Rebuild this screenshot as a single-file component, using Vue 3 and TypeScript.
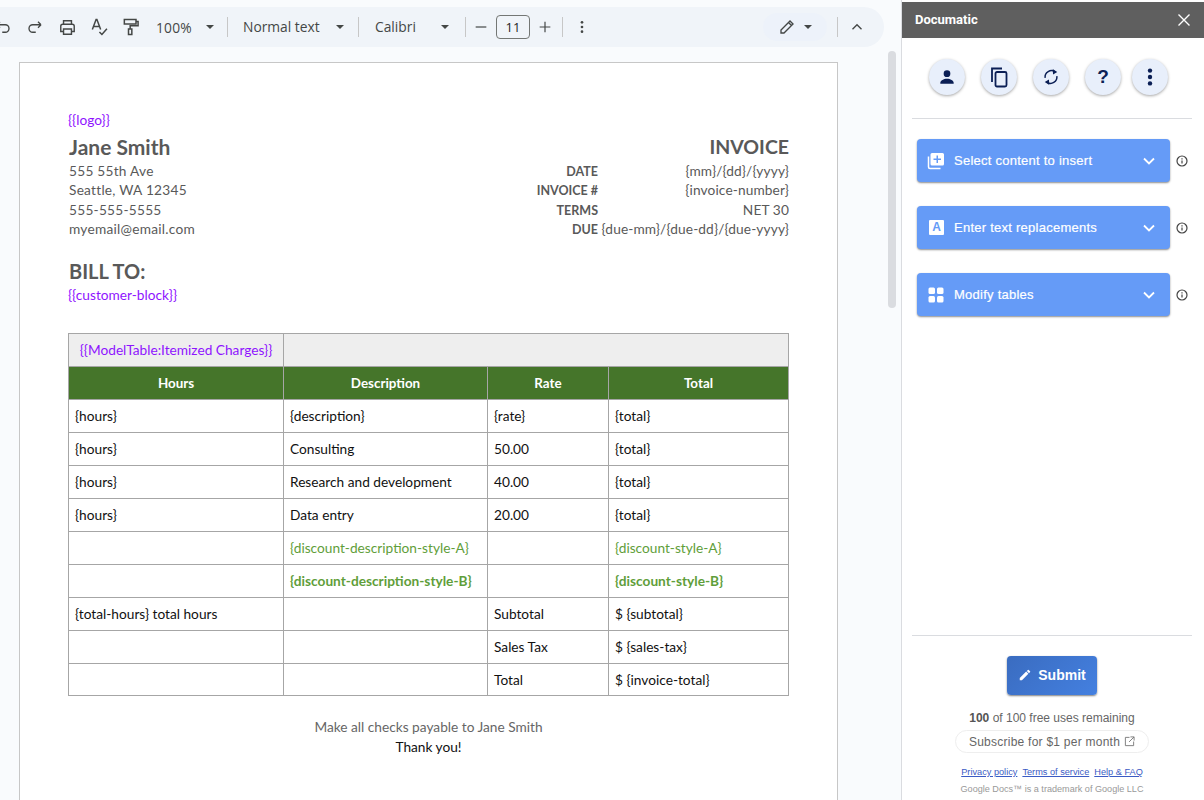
<script setup lang="ts">
interface Row { a: string; b: string; c: string; d: string; kind?: string }
const rows: Row[] = [
  { a: '{hours}', b: '{description}', c: '{rate}', d: '{total}' },
  { a: '{hours}', b: 'Consulting', c: '50.00', d: '{total}' },
  { a: '{hours}', b: 'Research and development', c: '40.00', d: '{total}' },
  { a: '{hours}', b: 'Data entry', c: '20.00', d: '{total}' },
  { a: '', b: '{discount-description-style-A}', c: '', d: '{discount-style-A}', kind: 'green' },
  { a: '', b: '{discount-description-style-B}', c: '', d: '{discount-style-B}', kind: 'green bold' },
  { a: '{total-hours} total hours', b: '', c: 'Subtotal', d: '$ {subtotal}' },
  { a: '', b: '', c: 'Sales Tax', d: '$ {sales-tax}' },
  { a: '', b: '', c: 'Total', d: '$ {invoice-total}' },
]
const meta = [
  ['DATE', '{mm}/{dd}/{yyyy}'],
  ['INVOICE #', '{invoice-number}'],
  ['TERMS', 'NET 30'],
  ['DUE', '{due-mm}/{due-dd}/{due-yyyy}'],
]
const address = ['555 55th Ave', 'Seattle, WA 12345', '555-555-5555', 'myemail@email.com']
</script>

<template>
  <div class="app">
    <main class="main">
      <div class="toolbar">
        <button class="tb"><svg width="18" height="18" viewBox="0 0 24 24" class="ic"><path d="M4 9h11a5 5 0 0 1 0 10h-4M4 9l4-4M4 9l4 4" /></svg></button>
        <button class="tb"><svg width="18" height="18" viewBox="0 0 24 24" class="ic"><path d="M20 9H9a5 5 0 0 0 0 10h4M20 9l-4-4M20 9l-4 4" /></svg></button>
        <button class="tb"><svg width="19" height="19" viewBox="0 0 24 24" class="ic"><path d="M7 8V3.500h10V8M7 17H3.500v-6.500a2.500 2.500 0 0 1 2.500-2.500h12a2.500 2.500 0 0 1 2.500 2.500V17H17M7 14h10v6.500H7z" /></svg></button>
        <button class="tb"><svg width="20" height="20" viewBox="0 0 24 24" class="ic"><path d="M4 15L8.500 3h1L14 15M5.500 11.500h7M12.500 18l3 3 6-7" /></svg></button>
        <button class="tb"><svg width="20" height="20" viewBox="0 0 24 24" class="ic"><path d="M4 3h14v5.500H4zM18 5.500h2.500v5H11v4M9 14.500h4V21H9z" /></svg></button>
        <div class="drop zoom"><span>100%</span><i class="caret"></i></div>
        <i class="sep"></i>
        <div class="drop style"><span>Normal text</span><i class="caret"></i></div>
        <i class="sep"></i>
        <div class="drop font"><span>Calibri</span><i class="caret"></i></div>
        <i class="sep"></i>
        <button class="tb sm"><svg width="16" height="16" viewBox="0 0 24 24" class="ic"><path d="M4 12h16" /></svg></button>
        <div class="size">11</div>
        <button class="tb sm plus"><svg width="16" height="16" viewBox="0 0 24 24" class="ic"><path d="M4 12h16M12 4v16" /></svg></button>
        <i class="sep"></i>
        <button class="tb dots"><svg width="16" height="16" viewBox="0 0 24 24"><circle cx="12" cy="5" r="2" /><circle cx="12" cy="12" r="2" /><circle cx="12" cy="19" r="2" /></svg></button>
        <div class="mode">
          <svg width="18" height="18" viewBox="0 0 24 24" class="ic"><path d="M4 20v-4L16 4l4 4L8 20zM14 6l4 4" /></svg>
          <i class="caret"></i>
        </div>
        <i class="sep last"></i>
        <button class="tb chev"><svg width="18" height="18" viewBox="0 0 24 24" class="ic"><path d="M6 15l6-6 6 6" /></svg></button>
      </div>

      <div class="canvas">
        <article class="page">
          <p class="tag logo">{{ '{{logo}\u007d' }}</p>
          <header class="head">
            <div class="from">
              <h1>Jane Smith</h1>
              <p v-for="l in address" :key="l" class="line">{{ l }}</p>
            </div>
            <div class="inv">
              <h2>INVOICE</h2>
              <div v-for="m in meta" :key="m[0]" class="meta">
                <b>{{ m[0] }}</b><span>{{ m[1] }}</span>
              </div>
            </div>
          </header>
          <h3>BILL TO:</h3>
          <p class="tag cust">{{ '{{customer-block}\u007d' }}</p>

          <table>
            <colgroup><col class="c1" /><col class="c2" /><col class="c3" /><col class="c4" /></colgroup>
            <tbody>
              <tr class="model">
                <td class="tag">{{ '{{ModelTable:Itemized Charges}\u007d' }}</td>
                <td colspan="3"></td>
              </tr>
              <tr class="th"><td>Hours</td><td>Description</td><td>Rate</td><td>Total</td></tr>
              <tr v-for="(r, i) in rows" :key="i" :class="r.kind">
                <td>{{ r.a }}</td><td>{{ r.b }}</td><td>{{ r.c }}</td><td>{{ r.d }}</td>
              </tr>
            </tbody>
          </table>
          <p class="foot grey">Make all checks payable to Jane Smith</p>
          <p class="foot">Thank you!</p>
        </article>
        <div class="scroll"></div>
      </div>
    </main>

    <aside class="panel">
      <div class="ptitle">
        <span>Documatic</span>
        <svg width="14" height="14" viewBox="0 0 14 14"><path d="M1.500 1.500l11 11M12.500 1.500l-11 11" stroke="#fff" stroke-width="1.400" fill="none" /></svg>
      </div>
      <div class="round-row">
        <button class="round"><svg width="20" height="20" viewBox="0 0 24 24"><circle cx="12" cy="8" r="4" /><path d="M4 19c0-3 4-5 8-5s8 2 8 5v1H4z" /></svg></button>
        <button class="round"><svg width="24" height="24" viewBox="0 0 24 24" class="navy-line"><path d="M5 17V3.500h10" /><rect x="8.500" y="7" width="11" height="14.500" rx="1.500" /></svg></button>
        <button class="round"><svg width="20" height="20" viewBox="0 0 24 24" class="navy-line"><path d="M5 13a7.500 7.500 0 0 1 12-7M19 11a7.500 7.500 0 0 1-12 7" /><path class="fill" d="M14 2.500l5.500 3.500-5 3zM10 21.500L4.500 18l5-3z" /></svg></button>
        <button class="round q">?</button>
        <button class="round"><svg width="22" height="22" viewBox="0 0 24 24"><circle cx="12" cy="5" r="2.400" /><circle cx="12" cy="12" r="2.400" /><circle cx="12" cy="19" r="2.400" /></svg></button>
      </div>
      <hr class="rule" />
      <div class="sections">
        <div class="sec-row">
          <div class="sec">
            <svg width="18" height="18" viewBox="0 0 18 18"><path fill="#fff" fill-rule="evenodd" d="M5 1h10.500A1.500 1.500 0 0 1 17 2.500V12a1.500 1.500 0 0 1-1.500 1.500H5A1.500 1.500 0 0 1 3.500 12V2.500A1.500 1.500 0 0 1 5 1zM9.500 3.500v3h-3V8h3v3H11V8h3V6.500h-3v-3z" /><path d="M1.500 4.500V15A1.500 1.500 0 0 0 3 16.500h10.500" stroke="#fff" stroke-width="1.500" fill="none" /></svg>
            <span>Select content to insert</span>
            <svg class="chev-w" width="14" height="14" viewBox="0 0 14 14"><path d="M2 4.500l5 5 5-5" /></svg>
          </div>
          <svg class="info" width="12" height="12" viewBox="0 0 12 12"><circle cx="6" cy="6" r="5" /><path d="M6 5.500v3M6 3.200v1.200" /></svg>
        </div>
        <div class="sec-row">
          <div class="sec">
            <span class="a-box">A</span>
            <span>Enter text replacements</span>
            <svg class="chev-w" width="14" height="14" viewBox="0 0 14 14"><path d="M2 4.500l5 5 5-5" /></svg>
          </div>
          <svg class="info" width="12" height="12" viewBox="0 0 12 12"><circle cx="6" cy="6" r="5" /><path d="M6 5.500v3M6 3.200v1.200" /></svg>
        </div>
        <div class="sec-row">
          <div class="sec">
            <svg width="18" height="18" viewBox="0 0 18 18" fill="#fff"><rect x="1.500" y="1.500" width="6.500" height="6.500" rx="1.500" /><rect x="10" y="1.500" width="6.500" height="6.500" rx="1.500" /><rect x="1.500" y="10" width="6.500" height="6.500" rx="1.500" /><rect x="10" y="10" width="6.500" height="6.500" rx="1.500" /></svg>
            <span>Modify tables</span>
            <svg class="chev-w" width="14" height="14" viewBox="0 0 14 14"><path d="M2 4.500l5 5 5-5" /></svg>
          </div>
          <svg class="info" width="12" height="12" viewBox="0 0 12 12"><circle cx="6" cy="6" r="5" /><path d="M6 5.500v3M6 3.200v1.200" /></svg>
        </div>
      </div>
      <div class="pfoot">
        <hr class="rule" />
        <button class="submit">
          <svg width="14" height="14" viewBox="0 0 24 24" fill="#fff"><path d="M3 17.250V21h3.750L17.810 9.940l-3.750-3.750L3 17.250zM20.710 7.040a1 1 0 0 0 0-1.410l-2.340-2.340a1 1 0 0 0-1.410 0l-1.830 1.830 3.750 3.750 1.830-1.830z" /></svg>
          <span>Submit</span>
        </button>
        <p class="uses"><b>100</b> of 100 free uses remaining</p>
        <div class="sub">
          <span>Subscribe for $1 per month</span>
          <svg width="11" height="11" viewBox="0 0 12 12"><path d="M6 1.500H1.500v9h9V6M7 1h4v4M11 1L5.500 6.500" stroke="#777" fill="none" /></svg>
        </div>
        <div class="links"><a>Privacy policy</a><a>Terms of service</a><a>Help &amp; FAQ</a></div>
        <p class="tm">Google Docs™ is a trademark of Google LLC</p>
      </div>
    </aside>
  </div>
</template>

<style>
html, body { margin: 0; background: #fff; overflow: hidden; }
</style>

<style scoped>
.app { display: flex; width: 1204px; height: 800px; overflow: hidden; }
p, h1, h2, h3 { margin: 0; }
button { border: 0; background: none; padding: 0; font: inherit; }

.main { width: 901px; height: 800px; background: #f9fbfd; overflow: hidden; flex: none; }
.toolbar { display: flex; align-items: center; height: 40px; width: 897px; margin: 7px 0 0 -13px; background: #f0f4f9; border-radius: 0 20px 20px 0; font-family: "Open Sans", sans-serif; font-size: 13.800px; color: #444746; }
.tb { width: 32px; height: 40px; display: flex; align-items: center; justify-content: center; flex: none; }
.ic { fill: none; stroke: #444746; stroke-width: 1.800; }
.tb svg circle { fill: #444746; }
.tb.sm { width: 30px; }
.tb.plus { margin-right: 2px; }
.drop { display: flex; align-items: center; flex: none; box-sizing: border-box; justify-content: space-between; }
.zoom { width: 80px; padding-left: 9px; padding-right: 13px; letter-spacing: .2px; }
.style { width: 130px; padding: 0 14.500px 1px 15px; }
.font { width: 106px; padding: 0 16px 1px 16px; }
.caret { width: 0; height: 0; border: 4.500px solid transparent; border-top-color: #444746; border-bottom: 0; display: block; }
.sep { width: 1px; height: 20px; background: #c7c7c7; flex: none; display: block; }
.size { width: 32px; height: 22px; border: 1px solid #747775; border-radius: 4px; text-align: center; line-height: 22px; font-size: 13px; color: #1f1f1f; flex: none; }
.tb.dots { margin-left: 3px; }
.mode { margin-left: 165px; width: 64px; height: 28px; border-radius: 14px; background: #edf2fa; display: flex; align-items: center; justify-content: center; gap: 8px; flex: none; }
.sep.last { margin-left: 10px; }
.tb.chev { margin-left: 3px; }

.canvas { display: flex; align-items: flex-start; padding: 15px 0 0 19px; }
.page { width: 721px; height: 900px; flex: none; background: #fff; border: 1px solid #c7c7c7; padding: 47px 48px 0 48px; font-family: Lato, sans-serif; font-size: 13.700px; color: #595959; }
.tag { color: #8f14ff; }
.logo { line-height: 19px; }
.head { display: flex; justify-content: space-between; }
.from { padding-left: 1px; }
h1 { font-size: 21px; line-height: 29px; margin-top: 3px; font-weight: 700; color: #595959; }
.line { line-height: 19.400px; letter-spacing: .25px; }
.inv { width: 300px; text-align: right; }
h2 { font-size: 19.500px; line-height: 29px; margin-top: 3px; font-weight: 700; color: #595959; }
.meta { display: flex; justify-content: flex-end; align-items: baseline; height: 19.400px; line-height: 19.400px; }
.meta b { width: 100px; flex: none; font-size: 12.500px; }
.meta span { width: 191px; flex: none; letter-spacing: .12px; }
h3 { font-size: 20px; line-height: 26px; margin: 19px 0 0 1px; font-weight: 700; color: #595959; }
.cust { line-height: 20px; margin-top: 1px; }
table { width: 720px; table-layout: fixed; border-collapse: collapse; margin-top: 28px; color: #111; }
.c1 { width: 215px; } .c2 { width: 204px; } .c3 { width: 121px; } .c4 { width: 180px; }
td { border: 1px solid #a6a6a6; height: 33px; padding: 0 6px; box-sizing: border-box; white-space: nowrap; overflow: hidden; }
.model td { background: #eeeeee; text-align: center; color: #8f14ff; }
.th td { background: #45752a; color: #fff; text-align: center; font-weight: 700; font-size: 13.400px; }
tr:last-child td { height: 32px; }
.green { color: #5f9e3a; }
.bold { font-weight: 700; }
.foot { text-align: center; color: #111; line-height: 20px; }
.grey { color: #666; margin-top: 21px; }
.scroll { width: 8px; height: 257px; background: #dadce0; border-radius: 4px; margin: -11px 0 0 50px; flex: none; }

.panel { width: 303px; height: 800px; flex: none; border-left: 1px solid #dadce0; box-sizing: border-box; display: flex; flex-direction: column; font-family: "Liberation Sans", Arial, sans-serif; padding-top: 2px; }
.ptitle { height: 36px; background: #5f5f5f; color: #fff; display: flex; align-items: center; justify-content: space-between; padding: 0 13px 1px 13px; box-sizing: border-box; font: 700 13px Roboto, sans-serif; }
.round-row { display: flex; padding: 21px 0 0 27px; height: 80px; box-sizing: border-box; }
.round { width: 36px; height: 36px; border-radius: 50%; background: #e8effb; box-shadow: 0 1px 3px rgba(0,0,0,.35); display: flex; align-items: center; justify-content: center; margin-right: 16px; color: #0b1f55; fill: #0b1f55; flex: none; }
.round svg { fill: #0b1f55; }
.round:nth-child(4) { margin-right: 11px; }
.navy-line, .round svg.navy-line { fill: none; stroke: #0b1f55; stroke-width: 1.800; }
.navy-line .fill { fill: #0b1f55; stroke: none; }
.q { font: 700 19px "Liberation Sans", sans-serif; }
.rule { border: 0; height: 1px; background: #dadce0; margin: 0 12px 0 10px; }
.sections { padding: 20px 0 0 15px; display: flex; flex-direction: column; gap: 24px; flex: 1; }
.sec-row { display: flex; align-items: center; }
.sec { width: 253px; height: 43px; background: #659bf7; border-radius: 4px; box-shadow: 0 1px 2px rgba(0,0,0,.45); color: #fff; display: flex; align-items: center; padding: 0 14px 0 10px; box-sizing: border-box; font-size: 13px; letter-spacing: .25px; gap: 9px; -webkit-text-stroke: .2px #fff; }
.sec span:not(.a-box) { flex: 1; }
.a-box { width: 15px; height: 15px; background: #fff; color: #659bf7; font-weight: 700; font-size: 12px; letter-spacing: 0; text-align: center; line-height: 15px; border-radius: 1px; margin: 0 1px 0 2px; flex: none; -webkit-text-stroke: 0; }
.chev-w { fill: none; stroke: #fff; stroke-width: 1.800; }
.info { margin-left: 6px; fill: none; stroke: #444; stroke-width: 1.200; }
.pfoot { display: flex; flex-direction: column; align-items: center; height: 165px; flex: none; padding-right: 2px; }
.pfoot .rule { align-self: stretch; margin: 0 10px; }
.submit { width: 90px; height: 39px; margin-top: 20px; padding-bottom: 1px; border-radius: 4px; background: linear-gradient(135deg, #3a6cc0, #4480e0); box-shadow: 0 1px 2px rgba(0,0,0,.5); color: #fff; font: 700 14px "Liberation Sans", sans-serif; display: flex; align-items: center; justify-content: center; gap: 6px; }
.uses { margin-top: 16px; font-size: 12px; line-height: 14px; color: #666; }
.uses b { color: #555; }
.sub { width: 194px; height: 23px; margin-top: 5px; box-sizing: border-box; border: 1px solid #eee; border-radius: 12px; display: flex; align-items: center; justify-content: center; gap: 4px; font-size: 12px; letter-spacing: .25px; color: #666; }
.links { display: flex; gap: 5px; margin-top: 14px; font-size: 9.200px; }
.links a { color: #3b5bc4; text-decoration: underline; }
.tm { font-size: 9.100px; margin-top: 7px; color: #999; }
</style>
